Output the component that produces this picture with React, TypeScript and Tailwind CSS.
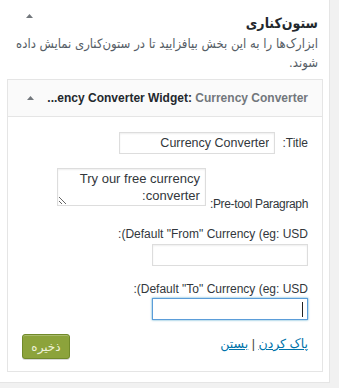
import React from "react";

function Tri() {
  return (
    <svg width="7" height="4" viewBox="0 0 7 4" className="block">
      <polygon points="0,4 7,4 3.5,0" fill="#72777c" />
    </svg>
  );
}

export default function App() {
  const font = { fontFamily: '"Liberation Sans", "DejaVu Sans", sans-serif' };
  const cond = { fontFamily: '"DejaVu Sans Condensed", "DejaVu Sans", sans-serif' };
  return (
    <div className="w-[339px] h-[388px] bg-[#f1f1f1] overflow-hidden" style={font}>
      <div dir="rtl" className="w-[330px] h-[383px] bg-white border-r border-b border-[#e5e5e5] box-border">
        {/* sidebar header */}
        <div className="flex items-center justify-between pr-[11px] pl-[26px] pt-[13px] h-[32px]">
          <h2 className="text-[14px] font-bold text-[#23282d] leading-[18px]" style={cond}>ستون‌کناری</h2>
          <div className="self-start mt-[1px]"><Tri /></div>
        </div>
        <p className="pr-[11px] pl-[6px] text-[13px] leading-[19px] text-[#555d66] mt-[2px]" style={cond}>
          <span className="whitespace-nowrap">ابزارک‌ها را به این بخش بیافزایید تا در ستون‌کناری نمایش داده</span>
          <br />
          شوند.
        </p>
        {/* widget */}
        <div className="mr-[6px] ml-[7px] mt-[7px] border border-[#e5e5e5]">
          <div className="h-[37px] bg-[#fafafa] border-b border-[#e5e5e5] flex items-center justify-between pr-[14px] pl-[19px]">
            <div dir="ltr" className="text-[12px] font-bold whitespace-nowrap">
              <span className="text-[#23282d]">...ency Converter Widget:</span>
              <span className="text-[#72777c]"> Currency Converter</span>
            </div>
            <Tri />
          </div>
          <div className="pr-[14px] pl-[14px] pt-[15px] pb-[12px] text-[12px] text-[#32373c]">
            {/* Title */}
            <div className="flex items-center gap-[7px]">
              <label dir="ltr" className="leading-[18px]">:Title</label>
              <input
                readOnly
                value="Currency Converter"
                className="w-[156px] h-[22px] border border-[#ddd] shadow-[inset_0_1px_2px_rgba(0,0,0,0.07)] px-[5px] text-[12.5px] text-[#32373c] outline-none bg-white"
                style={font}
              />
            </div>
            {/* Pre-tool paragraph */}
            <div className="flex items-end gap-[4px] mt-[14px]">
              <label dir="ltr" className="leading-[18px] tracking-[-0.35px]">:Pre-tool Paragraph</label>
              <textarea
                readOnly
                value="Try our free currency converter:"
                className="w-[149px] h-[38px] mb-[7px] border border-[#ddd] shadow-[inset_0_1px_2px_rgba(0,0,0,0.07)] px-[5px] py-[1px] text-[13px] leading-[17px] text-[#32373c] outline-none bg-white resize-y"
                style={font}
              />
            </div>
            {/* From */}
            <div dir="ltr" className="mt-[12px] leading-[18px] text-right">:(Default "From" Currency (eg: USD</div>
            <input
              readOnly
              value=""
              className="block mt-[1px] w-[156px] h-[22px] border border-[#ddd] shadow-[inset_0_1px_2px_rgba(0,0,0,0.07)] outline-none bg-white"
            />
            {/* To */}
            <div dir="ltr" className="mt-[14px] leading-[18px] text-right">:(Default "To" Currency (eg: USD</div>
            <div className="relative w-[156px] h-[22px] border border-[#5b9dd9] shadow-[0_0_2px_rgba(30,140,190,0.8)] bg-white">
              <span className="absolute right-[4px] top-[3px] w-px h-[15px] bg-[#222]" />
            </div>
            {/* actions */}
            <div className="flex items-start justify-between mt-[14px]">
              <div className="text-[12.5px] leading-[18px] mt-[1px]">
                <a className="text-[#0073aa] underline">پاک کردن</a>
                <span className="text-[#444]"> | </span>
                <a className="text-[#0073aa] underline">بستن</a>
              </div>
              <button className="w-[48px] h-[25px] rounded-[3px] bg-[#8ca33b] border border-[#718a2a] text-[#eef2d8] text-[12px] leading-[20px] shadow-[inset_0_1px_0_rgba(255,255,255,0.25),0_1px_0_rgba(0,0,0,0.15)]">
                ذخیره
              </button>
            </div>
          </div>
        </div>
      </div>
    </div>
  );
}
